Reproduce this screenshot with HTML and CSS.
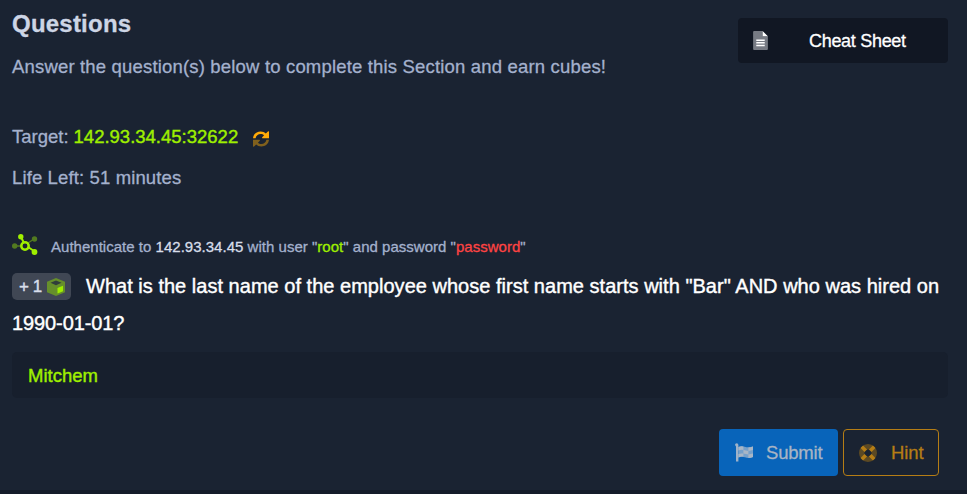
FILE: index.html
```html
<!DOCTYPE html>
<html lang="en">
<head>
<meta charset="utf-8">
<title>Questions</title>
<link rel="stylesheet" href="styles.css">
</head>
<body>
<main class="panel">
  <header class="header">
    <div>
      <h1 class="title"><span>Questions</span></h1>
      <p class="intro"><span>Answer the question(s) below to complete this Section and earn cubes!</span></p>
    </div>
    <button class="cheat">
      <svg class="cheat-icon" viewBox="0 0 14 18"><path fill="#777b84" d="M1 0h8v5h5v12a1 1 0 0 1-1 1H1a1 1 0 0 1-1-1V1a1 1 0 0 1 1-1z"/><path fill="#fff" d="M9 0l5 5H9zM3 8h8v1.400H3zM3 10.500h8v1.400H3zM3 13h8v1.400H3z"/></svg>
      <span class="cheat-label">Cheat Sheet</span>
    </button>
  </header>
  <section class="target">
    <p class="target-row"><span class="target-label">Target:</span> <span class="address">142.93.34.45:32622</span>
      <svg class="refresh" viewBox="0 0 16 16"><path fill="#ffaa08" d="M0 7.2C.5 2.8 3.8.5 7.6.5c2.3 0 4 .8 5.2 2L15.2.3 16 .6v6.6H9.3L9 6.4l2.1-2.1C10.200 3.500 9 3 7.700 3 5 3 3 4.700 2.600 7.200z"/><path fill="#80601d" d="M16 8.800c-.5 4.400-3.800 6.700-7.600 6.700-2.300 0-4-.8-5.200-2L.8 15.700 0 15.400V8.800h6.700l.3.8-2.100 2.100C5.800 12.500 7 13 8.300 13c2.700 0 4.700-1.700 5.100-4.200z"/></svg>
    </p>
    <p class="life"><span>Life Left: 51 minutes</span></p>
  </section>
  <section>
    <div class="auth">
      <svg class="nodes" viewBox="0 0 26 22"><path stroke="#527a20" stroke-width="1.500" d="M3 12h7M16 9l6-4"/><g fill="#527a20"><circle cx="2.700" cy="12" r="2.700"/><circle cx="22.500" cy="5" r="2.700"/></g><path stroke="#9fef00" stroke-width="2" d="M9 3l3 6M16 13l6 4"/><g fill="#9fef00"><circle cx="8.800" cy="2.700" r="2.700"/><circle cx="22.500" cy="18" r="2.900"/></g><circle cx="13" cy="12" r="3.700" fill="none" stroke="#9fef00" stroke-width="2.500"/></svg>
      <p class="auth-text"><span>Authenticate to <b class="host">142.93.34.45</b> with user "<b class="user">root</b>" and password "<b class="secret">password</b>"</span></p>
    </div>
    <p class="question"><span class="reward"><span class="points">+ 1</span><svg class="cube" viewBox="0 0 18 18"><path fill="#668f2b" d="M9 0l9 3.700v10.500L9 18l-9-3.800V3.700z"/><path fill="#303d3b" d="M9 2.500L14.500 4.800 9 7.200 3.500 4.800z"/><path fill="#9fef00" d="M10.500 10.100l5.500-2.300v5.400l-5.500 2.300z"/></svg></span><span class="q1">What is the last name of the employee whose first name starts with "Bar" AND who was hired on</span> <span class="q2">1990-01-01?</span></p>
    <div class="answer"><span>Mitchem</span></div>
  </section>
  <footer class="actions">
    <button class="submit">
      <svg class="flag" viewBox="0 0 18 18"><path fill="#9eb2c9" d="M0 1.500a1.700 1.700 0 0 1 3.400 0V18H1V3z"/><path fill="#76a0ca" d="M3.400 3.500c5-2.500 7 2 14.600-.5v10.500c-7 3-9-2-14.600.5z"/><path fill="#a8b6c6" d="M3.400 3.500q2.500-1 5-.5v3.500q-2.500-.5-5 .5zM8.400 6.500l5 1V11l-5-1zM13.400 4q2.300 0 4.600-1v3.500l-4.600 1zM3.400 10.500l5-.7V13q-2.500-.5-5 1zM13.400 11l4.600-1v3.500q-2.300 1-4.600 1z"/></svg>
      <span class="submit-label">Submit</span>
    </button>
    <button class="hint">
      <svg class="ring" viewBox="0 0 18 18"><circle cx="9" cy="9" r="6.300" fill="none" stroke="#5c4923" stroke-width="5.400"/><path stroke="#b57d15" stroke-width="3.600" d="M2.800 2.800l4 4M15.200 2.800l-4 4M2.800 15.200l4-4M15.200 15.200l-4-4"/></svg>
      <span class="hint-label">Hint</span>
    </button>
  </footer>
</main>
</body>
</html>
```
FILE: styles.css
```css
* { box-sizing: border-box; }
body { margin: 0; background: #1a2332; color: #a4b1cd; font: 18.5px/28px "Liberation Sans", Arial, sans-serif; }
h1, p { margin: 0; white-space: nowrap; }
b { font-weight: normal; }
button { font: inherit; display: flex; align-items: center; border: 0; border-radius: 4px; padding: 0; white-space: nowrap; }
svg { display: block; flex: none; }
.panel { height: 494px; padding: 8px 19px 0 12px; border-bottom: 4px solid #151c2a; -webkit-text-stroke: .3px; }
.header { display: flex; justify-content: space-between; height: 114px; }
.title { font-size: 24px; line-height: 32px; letter-spacing: .22px; color: #cdd5e5; }
.intro { margin-top: 13px; letter-spacing: .175px; }
.cheat { width: 210px; height: 45px; margin-top: 10px; padding-left: 15px; background: #111723; color: #fff; -webkit-text-stroke: .3px; }
.cheat-icon { width: 15px; height: 19px; }
.cheat-label { margin-left: 41px; font-size: 18px; letter-spacing: -.3px; }
.target { height: 108px; }
.target-row { display: flex; height: 41px; padding-top: 1px; }
.address { margin-left: 5px; color: #9fef00; -webkit-text-stroke: .4px; }
.refresh { width: 16px; height: 16px; margin: 8px 0 0 15px; }
.life { padding-top: 1px; letter-spacing: .13px; }
.auth { display: flex; height: 36px; }
.nodes { width: 26px; height: 22px; margin-top: 4px; }
.auth-text { margin-left: 13px; padding-top: 1px; font-size: 15px; line-height: 32px; letter-spacing: .02px; }
.auth-text .host { color: #d7deea; }
.auth-text .user { color: #9fef00; }
.auth-text .secret { color: #ff4343; }
.question { white-space: normal; line-height: 37px; height: 86px; padding-top: 2px; color: #fff; font-size: 20px; -webkit-text-stroke: .4px; }
.reward { display: inline-flex; align-items: center; width: 59px; height: 27px; padding-left: 7px; margin-right: 15px; border-radius: 5px; background: #404754; color: #d8deea; font-size: 17px; vertical-align: middle; position: relative; top: -1px; }
.points { width: 28px; letter-spacing: -.4px; }
.cube { width: 18px; height: 18px; }
.q1, .q2 { white-space: nowrap; }
.q1 { letter-spacing: .02px; }
.q2 { letter-spacing: -.1px; }
.answer { height: 46px; padding-left: 16px; line-height: 48px; border-radius: 5px; background: #171f2d; color: #9fef00; -webkit-text-stroke: .4px; }
.actions { display: flex; justify-content: flex-end; gap: 5px; margin: 31px 9px 0 0; }
.submit { width: 119px; height: 47px; padding-left: 16px; background: #0864ba; color: #a8b4c4; }
.flag { width: 18px; height: 19px; }
.submit-label { margin-left: 13px; letter-spacing: -.2px; }
.hint { width: 96px; height: 47px; padding-left: 15px; background: transparent; border: 1px solid #b57d15; color: #b57d15; }
.ring { width: 18px; height: 18px; }
.hint-label { margin-left: 14px; letter-spacing: -.1px; }
```
